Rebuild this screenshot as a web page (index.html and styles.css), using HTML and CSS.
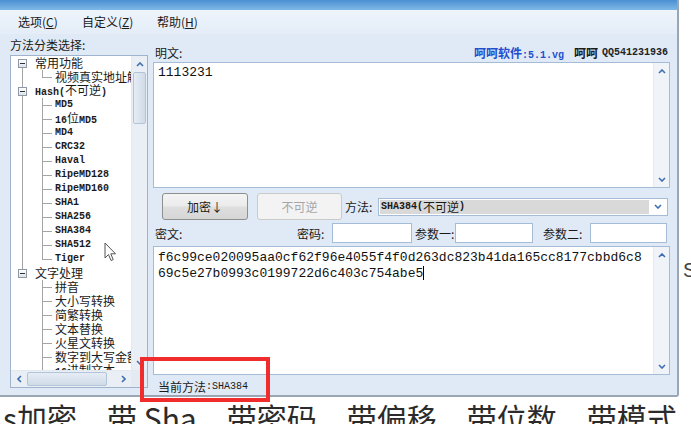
FILE: index.html
```html
<!DOCTYPE html>
<html>
<head>
<meta charset="utf-8">
<link rel="stylesheet" href="styles.css">
</head>
<body>
<div class="window">
  <div class="titlebar"></div>
  <div class="menubar">
    <span class="menu m1">选项(<u>C</u>)</span>
    <span class="menu m2">自定义(<u>Z</u>)</span>
    <span class="menu m3">帮助(<u>H</u>)</span>
  </div>
  <div class="main">
    <div class="left">
      <div class="lbl">方法分类选择:</div>
      <div class="tree">
        <div class="tree-content">
          <div class="row root r-first"><span class="exp"></span><span class="t">常用功能</span></div>
          <div class="row child cont"><span class="tee last"></span><span class="t">视频真实地址解析</span></div>
          <div class="row root r-mid"><span class="exp"></span><span class="t"><span class="en">Hash(</span>不可逆<span class="en">)</span></span></div>
          <div class="row child cont"><span class="tee"></span><span class="t en">MD5</span></div>
          <div class="row child cont"><span class="tee"></span><span class="t"><span class="en">16</span>位<span class="en">MD5</span></span></div>
          <div class="row child cont"><span class="tee"></span><span class="t en">MD4</span></div>
          <div class="row child cont"><span class="tee"></span><span class="t en">CRC32</span></div>
          <div class="row child cont"><span class="tee"></span><span class="t en">Haval</span></div>
          <div class="row child cont"><span class="tee"></span><span class="t en">RipeMD128</span></div>
          <div class="row child cont"><span class="tee"></span><span class="t en">RipeMD160</span></div>
          <div class="row child cont"><span class="tee"></span><span class="t en">SHA1</span></div>
          <div class="row child cont"><span class="tee"></span><span class="t en">SHA256</span></div>
          <div class="row child cont"><span class="tee"></span><span class="t en">SHA384</span></div>
          <div class="row child cont"><span class="tee"></span><span class="t en">SHA512</span></div>
          <div class="row child cont"><span class="tee last"></span><span class="t en">Tiger</span></div>
          <div class="row root r-last"><span class="exp"></span><span class="t">文字处理</span></div>
          <div class="row child"><span class="tee"></span><span class="t">拼音</span></div>
          <div class="row child"><span class="tee"></span><span class="t">大小写转换</span></div>
          <div class="row child"><span class="tee"></span><span class="t">简繁转换</span></div>
          <div class="row child"><span class="tee"></span><span class="t">文本替换</span></div>
          <div class="row child"><span class="tee"></span><span class="t">火星文转换</span></div>
          <div class="row child"><span class="tee"></span><span class="t">数字到大写金额</span></div>
          <div class="row child"><span class="tee"></span><span class="t"><span class="en">16</span>进制文本</span></div>
        </div>
        <div class="vscroll">
          <div class="sarrow"><svg width="8" height="5" viewBox="0 0 8 5"><path d="M1 4 L4 1 L7 4" fill="none" stroke="#3d6fb2" stroke-width="1.6"/></svg></div>
          <div class="vthumb"></div>
          <div class="strack"></div>
          <div class="sarrow"><svg width="8" height="5" viewBox="0 0 8 5"><path d="M1 1 L4 4 L7 1" fill="none" stroke="#3d6fb2" stroke-width="1.6"/></svg></div>
        </div>
        <div class="hscroll">
          <div class="harrow"><svg width="5" height="8" viewBox="0 0 5 8"><path d="M4 1 L1 4 L4 7" fill="none" stroke="#3d6fb2" stroke-width="1.6"/></svg></div>
          <div class="hthumb"></div>
          <div class="strack"></div>
          <div class="harrow"><svg width="5" height="8" viewBox="0 0 5 8"><path d="M1 1 L4 4 L1 7" fill="none" stroke="#3d6fb2" stroke-width="1.6"/></svg></div>
        </div>
        <div class="corner"></div>
      </div>
    </div>
    <div class="right">
      <div class="hdr">
        <span>明文:</span>
        <span class="about"><span class="blue"><b>呵呵软件</b><span class="en">:5.1.vg</span></span><b class="hh">呵呵</b><span class="en qq">QQ541231936</span></span>
      </div>
      <div class="textbox plain">
        <div class="tb-text">1113231</div>
        <div class="vs">
          <div class="sarrow"><svg width="8" height="5" viewBox="0 0 8 5"><path d="M1 4 L4 1 L7 4" fill="none" stroke="#3d6fb2" stroke-width="1.6"/></svg></div>
          <div class="sarrow"><svg width="8" height="5" viewBox="0 0 8 5"><path d="M1 1 L4 4 L7 1" fill="none" stroke="#3d6fb2" stroke-width="1.6"/></svg></div>
        </div>
      </div>
      <div class="btnrow">
        <div class="btn">加密↓</div>
        <div class="btn dis">不可逆</div>
        <span class="method-lbl">方法:</span>
        <div class="combo">
          <div class="sel"><span class="en2">SHA384(</span>不可逆<span class="en2">)</span></div>
          <div class="dd"><svg width="8" height="5" viewBox="0 0 8 5"><path d="M1 1 L4 4 L7 1" fill="none" stroke="#3d6fb2" stroke-width="1.6"/></svg></div>
        </div>
      </div>
      <div class="paramrow">
        <span class="pl-cipher">密文:</span>
        <span class="pl-pwd">密码:</span>
        <div class="inp i1"></div>
        <span class="pl-p1">参数一:</span>
        <div class="inp i2"></div>
        <span class="pl-p2">参数二:</span>
        <div class="inp i3"></div>
      </div>
      <div class="textbox cipher">
        <div class="tb-text c-text">
          <div>f6c99ce020095aa0cf62f96e4055f4f0d263dc823b41da165cc8177cbbd6c8</div>
          <div>69c5e27b0993c0199722d6c403c754abe5<span class="caret"></span></div>
        </div>
        <div class="vs">
          <div class="sarrow"><svg width="8" height="5" viewBox="0 0 8 5"><path d="M1 4 L4 1 L7 4" fill="none" stroke="#3d6fb2" stroke-width="1.6"/></svg></div>
          <div class="sarrow"><svg width="8" height="5" viewBox="0 0 8 5"><path d="M1 1 L4 4 L7 1" fill="none" stroke="#3d6fb2" stroke-width="1.6"/></svg></div>
        </div>
      </div>
      <div class="status">当前方法<span class="en3">:SHA384</span></div>
    </div>
  </div>
</div>
<div class="below">s加密、带 Sha、带密码、带偏移、带位数、带模式</div>
<div class="bg-s">S (</div>
<div class="annot"></div>
<svg class="cursor" width="13" height="20" viewBox="0 0 13 20"><path d="M1 1 L1 16 L4.5 12.5 L7 18.5 L9.2 17.6 L6.8 11.8 L11.5 11.8 Z" fill="#fff" stroke="#555" stroke-width="1"/></svg>
</body>
</html>
```

FILE: styles.css
```css
* { box-sizing: border-box; }
html, body { margin: 0; padding: 0; }
body {
  width: 691px;
  height: 424px;
  overflow: hidden;
  background: #fff;
  position: relative;
  font-family: "Noto Sans CJK SC", sans-serif;
  font-size: 12px;
  color: #1a1a1a;
}
.window {
  width: 679px;
  height: 397px;
  background: #dfeaf6;
  border-right: 2px solid #9aa6b3;
  border-bottom: 2px solid #9aa6b3;
  border-bottom-right-radius: 3px;
  display: flex;
  flex-direction: column;
}
.titlebar { height: 10px; background: linear-gradient(#4a90d2, #80b8e6); }
.menubar {
  height: 24px;
  display: flex;
  align-items: center;
  padding-left: 18px;
  background: linear-gradient(#eef4fb, #e4edf8);
}
.menu { line-height: 24px; }
.menu u { text-decoration: underline; }
.m1 { width: 64px; }
.m2 { width: 75px; }
.main { flex: 1; display: flex; }
.left { width: 150px; padding: 4px 0 0 10px; }
.lbl { height: 14px; line-height: 14px; }
.tree {
  margin-top: 3px;
  width: 138px;
  height: 333px;
  border: 1px solid #9fb4cc;
  background: #fff;
  display: grid;
  grid-template-columns: 120px 16px;
  grid-template-rows: 314px 17px;
}
.tree-content { overflow: hidden; }
.row { height: 14px; display: flex; align-items: center; white-space: nowrap; }
.t { line-height: 14px; font-size: 12px; }
.en { font-family: "Liberation Mono", monospace; font-size: 10px; font-weight: bold; }
.root { padding-left: 7px; }
.child { padding-left: 31px; }
.exp {
  width: 9px; height: 9px;
  border: 1px solid #8e98a6;
  background: linear-gradient(#ffffff, #dde3ea);
  display: flex; align-items: center; justify-content: center;
  margin-right: 8px;
}
.exp::after { content: ""; width: 5px; height: 1px; background: #333; }
.r-first { background: linear-gradient(#a4a4a4, #a4a4a4) 11px 10px / 1px 4px no-repeat; }
.r-mid { background: linear-gradient(#a4a4a4, #a4a4a4) 11px 0 / 1px 100% no-repeat; }
.r-last { background: linear-gradient(#a4a4a4, #a4a4a4) 11px 0 / 1px 3px no-repeat; }
.cont { background: linear-gradient(#a4a4a4, #a4a4a4) 11px 0 / 1px 100% no-repeat; }
.tee {
  width: 10px; height: 14px; margin-right: 3px; flex: none;
  background:
    linear-gradient(#a4a4a4, #a4a4a4) 0 0 / 1px 100% no-repeat,
    linear-gradient(#a4a4a4, #a4a4a4) 0 7px / 10px 1px no-repeat;
}
.tee.last {
  background:
    linear-gradient(#a4a4a4, #a4a4a4) 0 0 / 1px 8px no-repeat,
    linear-gradient(#a4a4a4, #a4a4a4) 0 7px / 10px 1px no-repeat;
}
.vscroll { grid-row: 1; grid-column: 2; display: flex; flex-direction: column; background: #eaeff5; border-left: 1px solid #e2e8ef; }
.hscroll { grid-row: 2; grid-column: 1; display: flex; background: #eaeff5; border-top: 1px solid #e2e8ef; }
.corner { grid-row: 2; grid-column: 2; background: #e4eaf1; }
.sarrow { height: 16px; display: flex; align-items: center; justify-content: center; flex: none; }
.harrow { width: 16px; display: flex; align-items: center; justify-content: center; flex: none; }
.strack { flex: 1; }
.vthumb { height: 52px; margin: 0 1px; border: 1px solid #b3c4d8; border-radius: 2px; background: linear-gradient(90deg, #e6edf5, #cfdbe8); }
.hthumb { width: 80px; margin: 1px 0; border: 1px solid #b3c4d8; border-radius: 2px; background: linear-gradient(#e6edf5, #cfdbe8); }
.right { width: 517px; margin-left: 3px; padding-top: 10px; display: flex; flex-direction: column; }
.hdr { height: 17px; display: flex; align-items: center; justify-content: space-between; padding: 0 2px; }
.about { display: flex; align-items: center; }
.blue { color: #1f4fcf; }
.blue .en { font-weight: bold; }
.hh { margin-left: 10px; margin-right: 4px; }
.qq { color: #222; }
.textbox { border: 1px solid #a4bcd6; background: #fff; display: flex; }
.plain { margin-top: 1px; height: 126px; }
.tb-text {
  flex: 1;
  padding: 2px 0 0 4px;
  font-family: "Liberation Mono", monospace;
  font-size: 13px;
  line-height: 16px;
  color: #111;
  white-space: nowrap;
  overflow: hidden;
}
.c-text { padding-top: 3px; }
.caret { display: inline-block; width: 1px; height: 14px; background: #000; vertical-align: -3px; }
.vs { width: 16px; display: flex; flex-direction: column; justify-content: space-between; background: #f0f4f9; border-left: 1px solid #e4eaf1; }
.btnrow { margin-top: 5px; height: 27px; display: flex; align-items: center; }
.btn {
  height: 27px; width: 86px; margin-left: 9px;
  border: 1px solid #8e8f8f; border-radius: 3px;
  background: linear-gradient(#f4f4f4, #ebebeb 48%, #dedede 52%, #d6d6d6);
  display: flex; align-items: center; justify-content: center;
}
.btn.dis { width: 85px; border-color: #cacaca; background: #f3f3f3; color: #a6a6a6; }
.method-lbl { margin-left: 3px; width: 33px; }
.combo {
  width: 290px; height: 18px;
  border: 1px solid #a4bcd6; background: #fff;
  display: flex; align-items: stretch; padding: 1px;
}
.sel { flex: 1; background: #d9d9d9; padding-left: 1px; display: flex; align-items: center; font-size: 12px; line-height: 14px; }
.en2 { font-family: "Liberation Mono", monospace; font-size: 10px; font-weight: bold; }
.dd { width: 17px; display: flex; align-items: center; justify-content: center; }
.paramrow { margin-top: 3px; height: 20px; display: flex; align-items: center; }
.pl-cipher { width: 144px; padding-left: 2px; }
.pl-pwd { width: 35px; }
.pl-p1 { width: 43px; padding-left: 3px; }
.pl-p2 { width: 57px; padding-left: 10px; }
.inp { height: 20px; border: 1px solid #a4bcd6; background: #fff; }
.i1 { width: 80px; }
.i2 { width: 78px; }
.i3 { width: 77px; }
.cipher { margin-top: 3px; height: 129px; }
.status { height: 19px; padding: 3px 0 0 5px; display: flex; align-items: center; font-size: 12px; }
.en3 { font-family: "Liberation Mono", monospace; font-size: 10px; }
.below {
  margin-top: 5px;
  padding-left: 3px;
  font-size: 30px;
  line-height: 30px;
  white-space: nowrap;
  color: #2b2b2b;
}
.bg-s {
  position: absolute; left: 683px; top: 259px;
  white-space: nowrap;
  font-family: "Liberation Sans", sans-serif; font-size: 20px; color: #444;
}
.annot {
  position: absolute; left: 140px; top: 357px;
  width: 130px; height: 45px;
  border: 4px solid #f02c2c;
}
.cursor { position: absolute; left: 104px; top: 242px; }
```
